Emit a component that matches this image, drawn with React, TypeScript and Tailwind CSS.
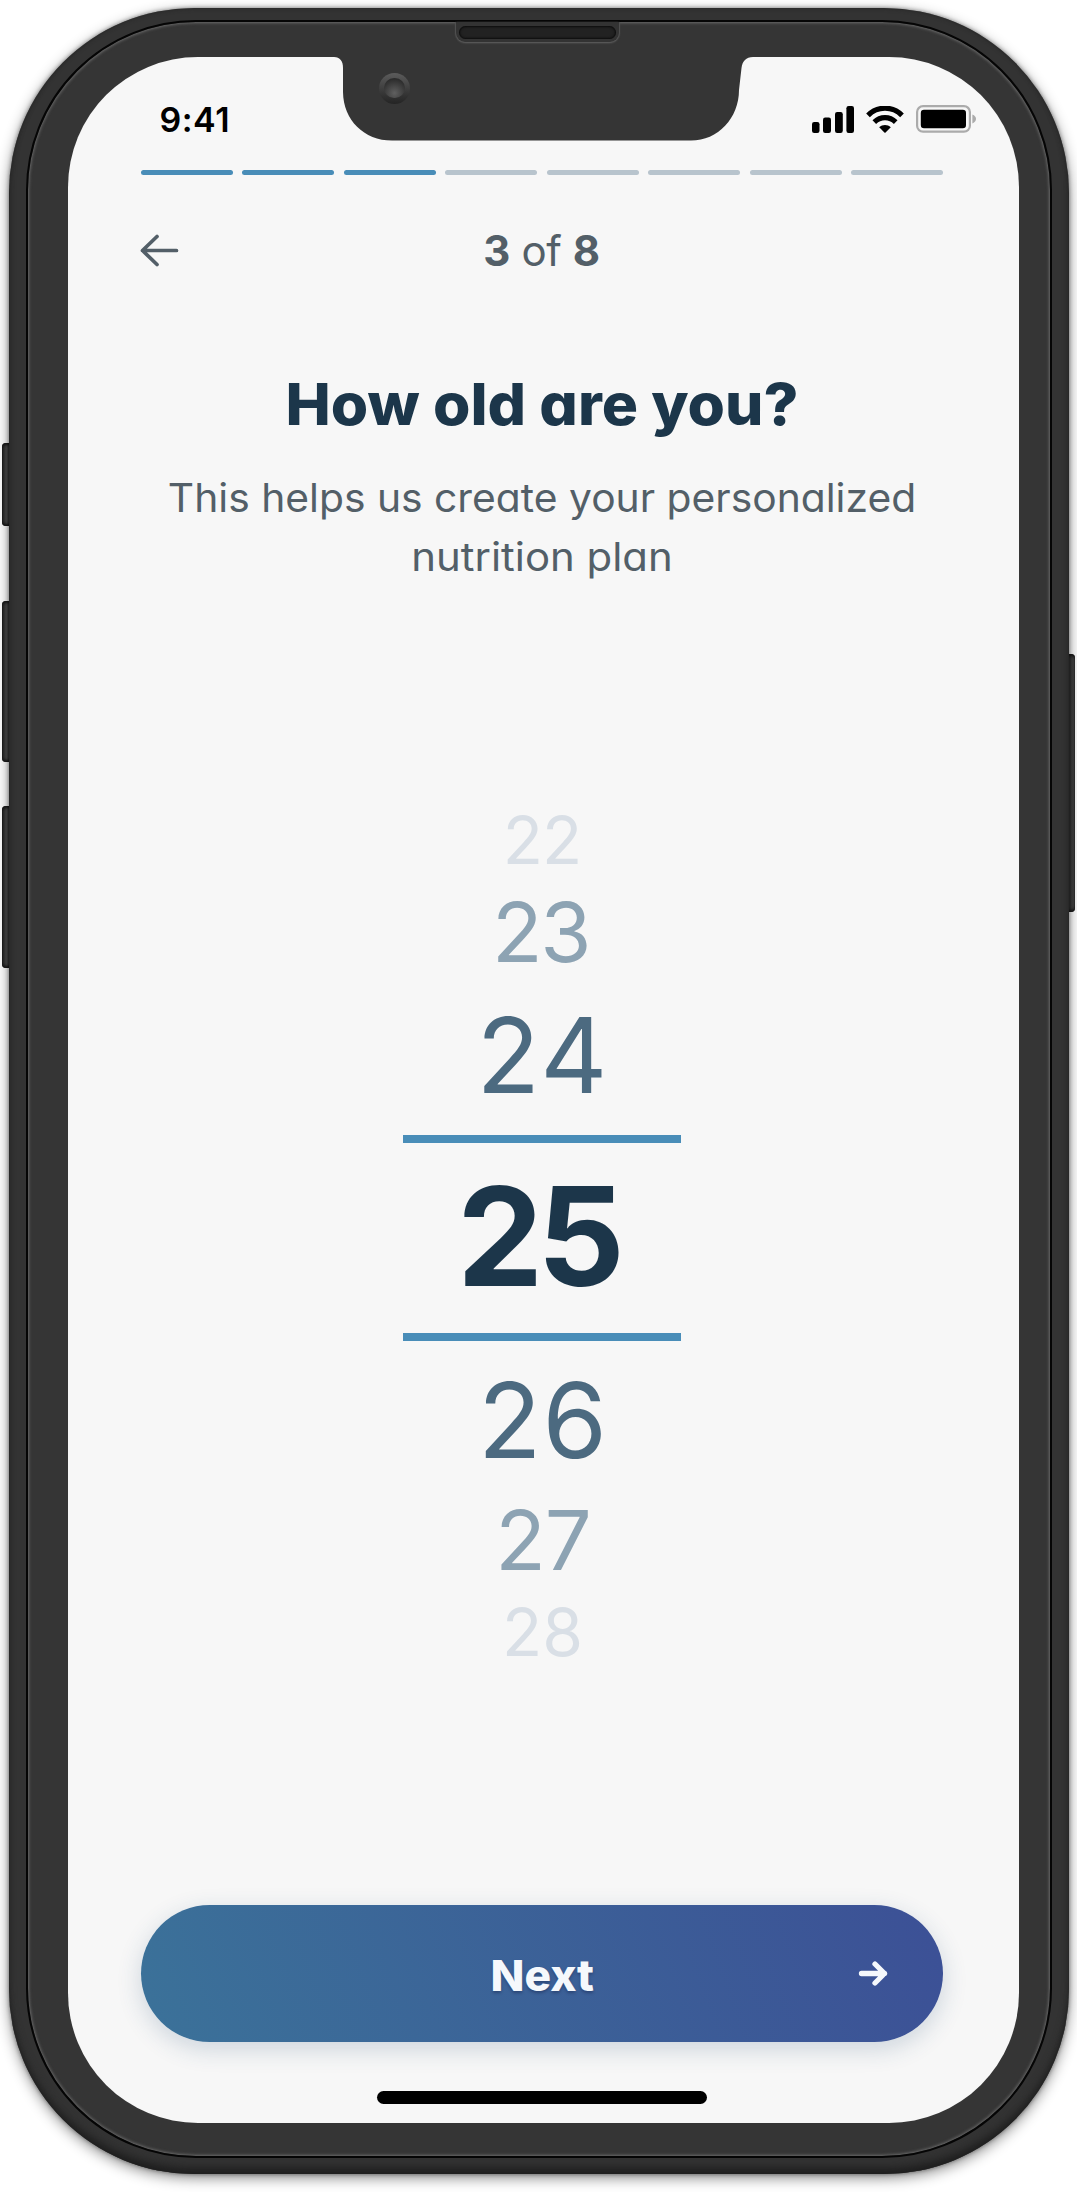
import React from 'react';

const TOTAL_STEPS = 8;
const CURRENT_STEP = 3;

const agesBefore = [
  { age: 22, style: 'h-[72px] leading-[72px] text-[66px] tracking-[-1px] text-[#d9dfe6]' },
  { age: 23, style: 'h-[112px] leading-[112px] text-[83px] tracking-[-2.500px] pr-[3px] text-[#8da3b3]' },
  { age: 24, style: 'h-[134px] leading-[134px] text-[104px] tracking-[2px] pl-[2px] text-[#4c6a80]' },
];

const agesAfter = [
  { age: 26, style: 'h-[158px] leading-[158px] text-[104px] tracking-[1px] pl-[2px] text-[#4c6a80]' },
  { age: 27, style: 'h-[83px] leading-[83px] text-[83px] tracking-[-1px] pl-[2px] text-[#8da3b3]' },
  { age: 28, style: 'h-[101px] leading-[101px] text-[66px] pl-[1px] text-[#d9dfe6]' },
];

function SignalIcon() {
  return (
    <svg width="42" height="27" viewBox="0 0 42 27" fill="#000">
      <rect x="0" y="16" width="7.5" height="11" rx="2.2" />
      <rect x="11" y="11.5" width="8" height="15.5" rx="2.2" />
      <rect x="23" y="6" width="7.8" height="21" rx="2.2" />
      <rect x="34.4" y="0" width="7.6" height="27" rx="2.2" />
    </svg>
  );
}

function WifiIcon() {
  return (
    <svg width="38" height="27" viewBox="0 0 38 27" fill="none">
      <path d="M2 9.3C11.6-.2 26.4-.2 36 9.3" stroke="#000" strokeWidth="5.2" />
      <path d="M8.3 16.1C14.4 10.2 23.6 10.2 29.7 16.1" stroke="#000" strokeWidth="5.2" />
      <path d="M13.2 21.3C16.5 18.2 21.5 18.2 24.8 21.3L19.6 26.5Q19 27 18.4 26.5Z" fill="#000" />
    </svg>
  );
}

function BatteryIcon() {
  return (
    <svg width="61" height="28" viewBox="0 0 61 28" fill="none">
      <rect x="1.1" y="1.1" width="52.8" height="25.6" rx="6" stroke="#ababab" strokeWidth="2.2" />
      <rect x="4.8" y="4.8" width="45.2" height="18.4" rx="3.2" fill="#000" />
      <path d="M56.4 9.6C61.2 11.4 61.2 16.6 56.4 18.4Z" fill="#ababab" />
    </svg>
  );
}

function StatusBar() {
  return (
    <div className="flex h-[112.5px] items-end justify-between pr-[42.5px] pl-[92px]">
      <span className="mb-[30px] h-[40px] text-[34px] leading-[40px] font-semibold tracking-[0.5px] text-black">9:41</span>
      <div className="mb-[37px] flex items-end">
        <SignalIcon />
        <div className="ml-[12px]"><WifiIcon /></div>
        <div className="ml-[12px]"><BatteryIcon /></div>
      </div>
    </div>
  );
}

function Notch() {
  return (
    <>
      <svg className="absolute top-[54px] left-[332px]" width="424" height="88" viewBox="332 54 424 88">
        <path
          d="M332 54V57H334C340 57.2 343 61 343 68V92C343.400 120 364 140.600 392 140.600H691C718 140.600 739 118 739 90L741.500 68C742.500 61 746 57 753 57H756V54Z"
          fill="#353535"
        />
      </svg>
      <div className="absolute top-[22px] left-[456px] h-[19.500px] w-[162.500px] rounded-b-[9px] bg-[#333] shadow-[0_1px_2px_#626262,1px_0_1px_#4c4c4c,-1px_0_1px_#4c4c4c]" />
      <div className="absolute top-[25.500px] left-[459px] h-[13.500px] w-[157px] rounded-[7px] bg-[#222] shadow-[inset_0_0_2px_1px_#0b0b0b]" />
      <div className="absolute top-[72.500px] left-[379px] flex size-[31px] items-center justify-center rounded-full bg-linear-to-b from-[#5c5c5c] to-[#242424]">
        <div className="size-[20.500px] rounded-full bg-[radial-gradient(circle_at_50%_75%,#606060,#2d2d2d_75%)]" />
      </div>
    </>
  );
}

function SideButtons() {
  const left = 'absolute left-[2px] w-[9px] rounded-l-[4px] bg-linear-to-r from-[#292929] via-[#4a4a4a] to-[#2c2c2c] shadow-[inset_0_2px_3px_#161616,inset_0_-2px_3px_#161616]';
  return (
    <>
      <div className={left + ' top-[443px] h-[83px]'} />
      <div className={left + ' top-[600.500px] h-[161.500px]'} />
      <div className={left + ' top-[806px] h-[162px]'} />
      <div className="absolute top-[654px] left-[1066px] h-[258px] w-[8.500px] rounded-r-[4px] bg-linear-to-r from-[#292929] via-[#383838] to-[#5a5a5a] shadow-[inset_0_2px_3px_#161616,inset_0_-2px_3px_#161616]" />
    </>
  );
}

function Progress() {
  return (
    <div className="flex gap-[9.700px]">
      {Array.from({ length: TOTAL_STEPS }, (_, i) => (
        <div key={i} className={i < CURRENT_STEP ? 'h-[5.200px] flex-1 rounded-full bg-[#498db8]' : 'h-[5.200px] flex-1 rounded-full bg-[#b8c4cd]'} />
      ))}
    </div>
  );
}

function Header() {
  return (
    <div className="relative mt-[52px] flex h-[48px] items-center justify-center">
      <button aria-label="Back" className="absolute top-[7.500px] left-[-1.500px]">
        <svg width="39" height="34" viewBox="0 0 39 34" fill="none" stroke="#535f68" strokeWidth="3.700" strokeLinecap="round" strokeLinejoin="round">
          <path d="M36.500 16.500H2.500M17 2.500L2.500 16.500L17 30.500" />
        </svg>
      </button>
      <p className="pr-[1px] text-[42px] leading-[48px] tracking-[-0.400px] text-[#535f68]">
        <b className="font-bold">3</b> of <b className="font-bold">8</b>
      </p>
    </div>
  );
}

function AgePicker() {
  return (
    <div className="mt-[218.500px] flex flex-col items-center">
      {agesBefore.map(({ age, style }) => (
        <div key={age} className={style}>{age}</div>
      ))}
      <div className="mt-[12.700px] h-[7.800px] w-[278px] bg-[#498db8]" />
      <div className="h-[186px] pr-[8px] text-[137px] leading-[186px] font-bold tracking-[-6px] text-[#1c364a]">25</div>
      <div className="mt-[4.800px] h-[8px] w-[278px] bg-[#498db8]" />
      {agesAfter.map(({ age, style }) => (
        <div key={age} className={style}>{age}</div>
      ))}
    </div>
  );
}

function NextButton() {
  return (
    <button className="relative mt-auto flex h-[137.500px] w-full shrink-0 items-center justify-center rounded-full bg-[linear-gradient(70deg,#3b7299,#3c5096)] shadow-[0_7px_24px_rgba(35,75,115,0.2)]">
      <span className="scale-x-[1.030] pt-[2px] text-[43px] leading-[48px] font-extrabold text-[#f5f8fc] [text-shadow:0_2px_3px_rgba(20,30,70,0.4)]">Next</span>
      <svg className="absolute top-[54px] right-[54.500px]" width="32" height="29" viewBox="0 0 32 29" fill="none" stroke="#f5f8fc" strokeWidth="5.300" strokeLinecap="round" strokeLinejoin="round">
        <path d="M4.500 14.500H27.500M18 5L27.500 14.500L18 24" />
      </svg>
    </button>
  );
}

export default function App() {
  return (
    <div className="relative h-[2192px] w-[1077px] overflow-hidden bg-white pt-[8px] pl-[9px] font-['Inter',sans-serif] [font-feature-settings:'cv11']">
      <SideButtons />
      <div className="relative h-[2166px] w-[1059.500px] rounded-[185px] bg-[#333] pt-[12px] pl-[16.500px] shadow-[0_4px_14px_rgba(0,0,0,0.45),0_0_4px_rgba(0,0,0,0.45),inset_0_-9px_10px_-3px_#1e1e1e,inset_0_0_4px_#242424]">
        <div className="h-[2138px] w-[1026px] rounded-[170px] border-2 border-[#050505] bg-[#353535] pt-[35px] pl-[40px] shadow-[inset_0_0_3px_1px_#6b6b6b]">
          <main className="flex h-[2065.500px] w-[951.500px] flex-col rounded-[130px] bg-[#f7f7f7]">
            <StatusBar />
            <div className="flex flex-1 flex-col pr-[76px] pl-[73.500px]">
              <Progress />
              <Header />
              <h1 className="mt-[89.400px] scale-x-[1.043] text-center text-[58px] leading-[80px] font-extrabold whitespace-nowrap text-[#1c364a]">How old are you?</h1>
              <p className="mt-[23.500px] text-center text-[39px] leading-[59px] whitespace-nowrap text-[#535f68]">
                <span className="block scale-x-[1.046]">This helps us create your personalized</span>
                <span className="block scale-x-[1.074]">nutrition plan</span>
              </p>
              <AgePicker />
              <NextButton />
              <div className="mt-[48.700px] mb-[19px] h-[12.500px] w-[330px] shrink-0 self-center rounded-full bg-black" />
            </div>
          </main>
        </div>
      </div>
      <Notch />
    </div>
  );
}
